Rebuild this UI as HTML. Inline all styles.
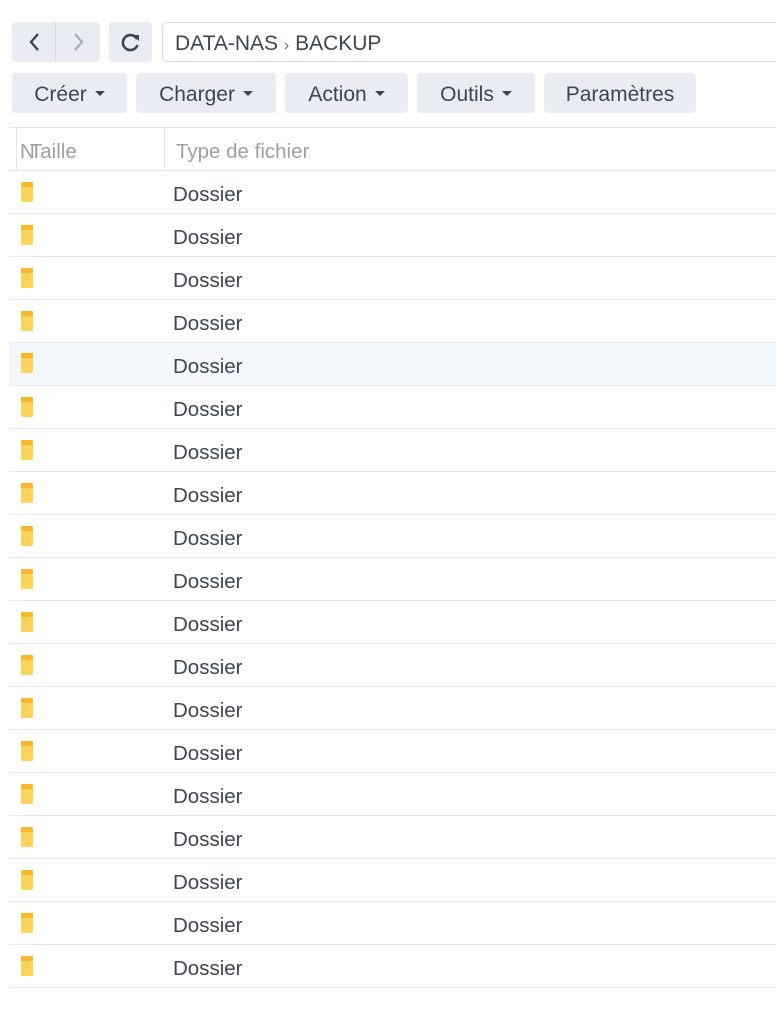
<!DOCTYPE html>
<html><head><meta charset="utf-8"><style>
*{box-sizing:border-box;margin:0;padding:0}
body{width:776px;height:1017px;background:#fff;font-family:"Liberation Sans",sans-serif;color:#3d4650;position:relative;overflow:hidden}
.b{position:absolute;background:#e9edf3;border-radius:4px}
.t{position:absolute;font-size:21px;line-height:44px;text-align:center}
.car{display:inline-block;width:0;height:0;border-left:5px solid transparent;border-right:5px solid transparent;border-top:5px solid #3d4650;vertical-align:middle;margin-left:8px;margin-top:-3px}
.row{position:absolute;left:9px;width:767px;height:43px;border-bottom:1px solid #e6ebf1}
.row .ic{position:absolute;left:12px;top:11px;width:12px;height:20px;background:#ffd25a;border-top:5px solid #fbb62a;border-radius:1px}
.row span{position:absolute;left:164px;top:2px;line-height:43px;font-size:20.5px}
</style></head><body>
<div class="b" style="left:12px;top:22px;width:88px;height:40px"></div>
<div style="position:absolute;left:55px;top:22px;width:1px;height:40px;background:#d5dbe3"></div>
<svg style="position:absolute;left:12px;top:22px" width="88" height="40"><path d="M26 12 L19 20 L26 28" stroke="#3d4650" stroke-width="2.4" fill="none"/><path d="M63 12 L70 20 L63 28" stroke="#a8afb8" stroke-width="2.4" fill="none"/></svg>
<div class="b" style="left:109px;top:22px;width:43px;height:40px"></div>
<svg style="position:absolute;left:109px;top:22px" width="43" height="40"><path d="M28 17 A7.5 7.5 0 1 0 28.5 23" stroke="#3d4650" stroke-width="2.6" fill="none"/><path d="M23 13 L30 13 L30 19 Z" fill="#3d4650"/></svg>
<div style="position:absolute;left:162px;top:22px;width:630px;height:40px;border:1px solid #d5dbe3;border-radius:5px"></div>
<div class="t" style="left:175px;top:22px;text-align:left">DATA-NAS <span style="font-size:16px;color:#6b737c">›</span> BACKUP</div>
<div class="b" style="left:12px;top:73px;width:115px;height:40px"></div><div class="t" style="left:12px;top:73px;width:115px">Créer<i class="car"></i></div>
<div class="b" style="left:136px;top:73px;width:140px;height:40px"></div><div class="t" style="left:136px;top:73px;width:140px">Charger<i class="car"></i></div>
<div class="b" style="left:285px;top:73px;width:123px;height:40px"></div><div class="t" style="left:285px;top:73px;width:123px">Action<i class="car"></i></div>
<div class="b" style="left:417px;top:73px;width:118px;height:40px"></div><div class="t" style="left:417px;top:73px;width:118px">Outils<i class="car"></i></div>
<div class="b" style="left:544px;top:73px;width:152px;height:40px"></div><div class="t" style="left:544px;top:73px;width:152px">Paramètres</div>
<div style="position:absolute;left:9px;top:127px;width:767px;height:44px;border-top:1px solid #e1e6ee;border-bottom:1px solid #e1e6ee"></div>
<div style="position:absolute;left:16px;top:128px;width:1px;height:42px;background:#e1e6ee"></div>
<div style="position:absolute;left:164px;top:128px;width:1px;height:42px;background:#e1e6ee"></div>
<div style="position:absolute;left:20px;top:130px;line-height:43px;font-size:20.5px;color:#9aa0a7">N</div>
<div style="position:absolute;left:30px;top:130px;line-height:43px;font-size:20.5px;color:#9aa0a7">Taille</div>
<div style="position:absolute;left:176px;top:130px;line-height:43px;font-size:20.5px;color:#9aa0a7">Type de fichier</div>
<div class="row" style="top:171px"><i class="ic"></i><span>Dossier</span></div>
<div class="row" style="top:214px"><i class="ic"></i><span>Dossier</span></div>
<div class="row" style="top:257px"><i class="ic"></i><span>Dossier</span></div>
<div class="row" style="top:300px"><i class="ic"></i><span>Dossier</span></div>
<div class="row" style="top:342px;height:44px;background:#f4f8fc;border-top:1px solid #e6ebf1"><i class="ic" style="top:10px"></i><span>Dossier</span></div>
<div class="row" style="top:386px"><i class="ic"></i><span>Dossier</span></div>
<div class="row" style="top:429px"><i class="ic"></i><span>Dossier</span></div>
<div class="row" style="top:472px"><i class="ic"></i><span>Dossier</span></div>
<div class="row" style="top:515px"><i class="ic"></i><span>Dossier</span></div>
<div class="row" style="top:558px"><i class="ic"></i><span>Dossier</span></div>
<div class="row" style="top:601px"><i class="ic"></i><span>Dossier</span></div>
<div class="row" style="top:644px"><i class="ic"></i><span>Dossier</span></div>
<div class="row" style="top:687px"><i class="ic"></i><span>Dossier</span></div>
<div class="row" style="top:730px"><i class="ic"></i><span>Dossier</span></div>
<div class="row" style="top:773px"><i class="ic"></i><span>Dossier</span></div>
<div class="row" style="top:816px"><i class="ic"></i><span>Dossier</span></div>
<div class="row" style="top:859px"><i class="ic"></i><span>Dossier</span></div>
<div class="row" style="top:902px"><i class="ic"></i><span>Dossier</span></div>
<div class="row" style="top:945px"><i class="ic"></i><span>Dossier</span></div>
</body></html>
